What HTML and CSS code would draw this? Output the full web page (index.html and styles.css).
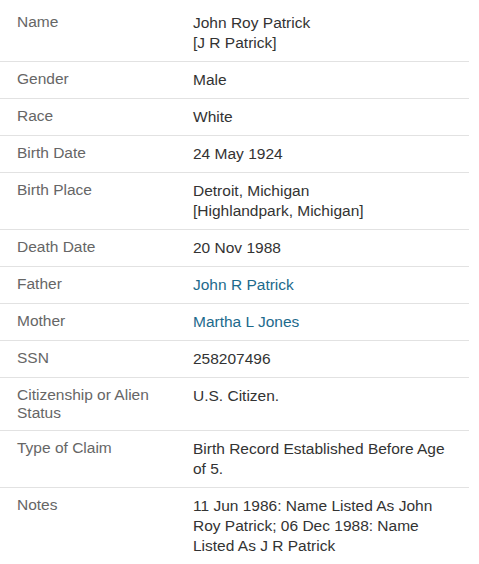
FILE: index.html
```html
<!DOCTYPE html>
<html>
<head>
<meta charset="utf-8">
<link rel="stylesheet" href="styles.css">
</head>
<body>
<table class="facts">
  <tr><th>Name</th><td>John Roy Patrick<br>[J R Patrick]</td></tr>
  <tr><th>Gender</th><td>Male</td></tr>
  <tr><th>Race</th><td>White</td></tr>
  <tr><th>Birth Date</th><td>24 May 1924</td></tr>
  <tr><th>Birth Place</th><td>Detroit, Michigan<br>[Highlandpark, Michigan]</td></tr>
  <tr><th>Death Date</th><td>20 Nov 1988</td></tr>
  <tr><th>Father</th><td><a class="link" href="#">John R Patrick</a></td></tr>
  <tr><th>Mother</th><td><a class="link" href="#">Martha L Jones</a></td></tr>
  <tr><th>SSN</th><td>258207496</td></tr>
  <tr><th>Citizenship or Alien Status</th><td>U.S. Citizen.</td></tr>
  <tr><th>Type of Claim</th><td>Birth Record Established Before Age of 5.</td></tr>
  <tr class="last"><th>Notes</th><td>11 Jun 1986: Name Listed As John Roy Patrick; 06 Dec 1988: Name Listed As J R Patrick</td></tr>
</table>
</body>
</html>
```
FILE: styles.css
```css
html, body {
  margin: 0;
  padding: 0;
  background: #fff;
}
body {
  padding-top: 5px;
  font-family: "Liberation Sans", Arial, sans-serif;
  font-size: 15.5px;
}
.facts {
  width: 469px;
  border-collapse: collapse;
  table-layout: fixed;
}
.facts tr {
  border-bottom: 1px solid #e2e2e2;
}
.facts tr.last {
  border-bottom: none;
}
.facts th {
  width: 159px;
  text-align: left;
  vertical-align: top;
  font-weight: normal;
  color: #666;
  padding: 8px 0 8px 17px;
  line-height: 18px;
}
.facts td {
  vertical-align: top;
  color: #333;
  padding: 8px 14px 8px 17px;
  line-height: 20px;
}
.link {
  color: #1d6a8c;
  text-decoration: none;
}
```
